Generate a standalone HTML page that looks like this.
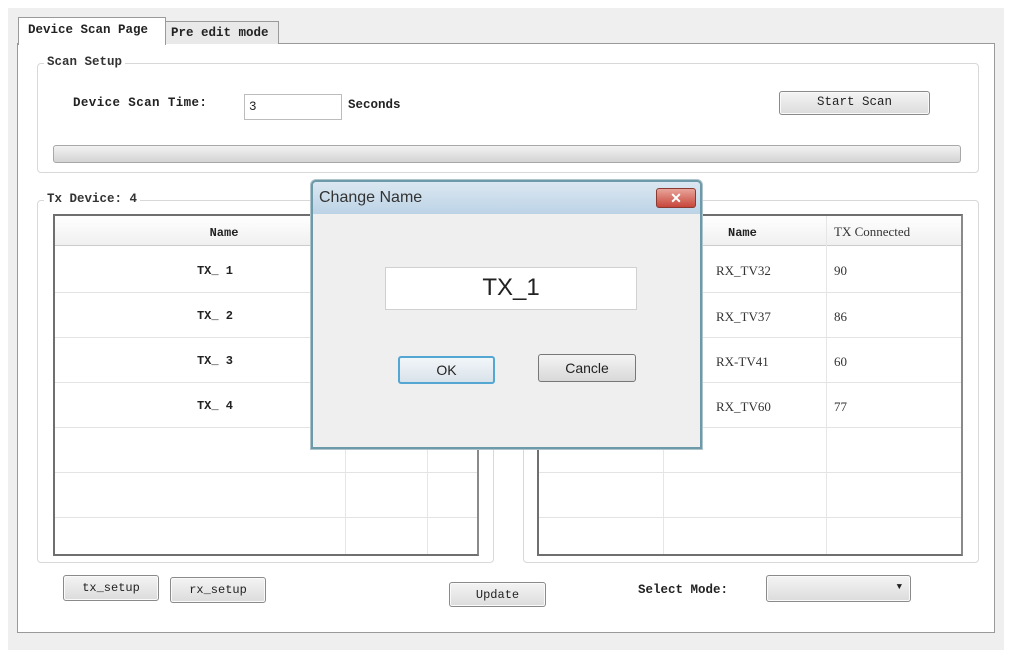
<!DOCTYPE html>
<html><head><meta charset="utf-8"><style>
*{box-sizing:border-box;margin:0;padding:0}
body{width:1014px;height:658px;background:#fff;position:relative;overflow:hidden;font-family:"Liberation Mono",monospace;font-size:12px;color:#222}
.a{position:absolute}
.btn{position:absolute;border:1px solid #8a8a8a;border-radius:3px;background:linear-gradient(#f4f4f4,#dcdcdc);text-align:center;font-size:12px;box-shadow:inset 0 0 0 1px #fafafa}
.grp{position:absolute;border:1px solid #d8d8d8;border-radius:4px}
.lg{position:absolute;background:#fff;padding:0 3px;font-size:12.5px;font-weight:bold;color:#333}
.hl{position:absolute;height:1px;background:#e3e3e3}
.vl{position:absolute;width:1px;background:#e6e6e6}
.c{position:absolute;font-weight:bold;font-size:12px;text-align:center}
.s{position:absolute;font-family:"Liberation Sans Narrow","Liberation Serif",serif;font-size:13px;color:#333}
</style></head><body>
<div class="a" style="left:8px;top:8px;width:996px;height:642px;background:#efefef"></div>
<div class="a" style="left:17px;top:43px;width:978px;height:590px;background:#fff;border:1px solid #9a9a9a"></div>
<div class="a" style="left:165px;top:21px;width:114px;height:23px;background:#e9e9e9;border:1px solid #9a9a9a;border-bottom:none;font-weight:bold;font-size:12.5px;padding:4px 0 0 5px">Pre edit mode</div>
<div class="a" style="left:18px;top:17px;width:148px;height:28px;background:#fff;border:1px solid #9a9a9a;border-bottom:none;font-weight:bold;font-size:12.5px;padding:5px 0 0 9px">Device Scan Page</div>
<div class="grp" style="left:37px;top:63px;width:942px;height:110px"></div>
<div class="lg" style="left:44px;top:55px">Scan Setup</div>
<div class="a" style="left:73px;top:96px;font-weight:bold;font-size:12.5px;letter-spacing:0.4px">Device Scan Time:</div>
<div class="a" style="left:244px;top:94px;width:98px;height:26px;border:1px solid #bcbcbc;padding:5px 0 0 4px;font-size:12.5px">3</div>
<div class="a" style="left:348px;top:98px;font-weight:bold;font-size:12.5px">Seconds</div>
<div class="btn" style="left:779px;top:91px;width:151px;height:24px;padding-top:3px;font-size:12.5px">Start Scan</div>
<div class="a" style="left:53px;top:145px;width:908px;height:18px;border:1px solid #a8a8a8;border-radius:3px;background:linear-gradient(#f2f2f2,#d4d4d4)"></div>
<div class="grp" style="left:37px;top:200px;width:457px;height:363px"></div>
<div class="lg" style="left:44px;top:192px">Tx Device: 4</div>
<div class="a" style="left:53px;top:214px;width:426px;height:342px;border:2px solid #6f6f6f;border-right-color:#8a8a8a;background:#fff"></div>
<div class="a" style="left:55px;top:216px;width:422px;height:30px;background:linear-gradient(#fff,#f0f0f0);border-bottom:1px solid #ccc"></div>
<div class="c" style="left:55px;top:226px;width:338px">Name</div>
<div class="vl" style="left:345px;top:246px;height:308px"></div>
<div class="vl" style="left:427px;top:246px;height:308px"></div>
<div class="hl" style="left:55px;top:292px;width:422px"></div>
<div class="hl" style="left:55px;top:337px;width:422px"></div>
<div class="hl" style="left:55px;top:382px;width:422px"></div>
<div class="hl" style="left:55px;top:427px;width:422px"></div>
<div class="hl" style="left:55px;top:472px;width:422px"></div>
<div class="hl" style="left:55px;top:517px;width:422px"></div>
<div class="c" style="left:150px;top:264px;width:130px">TX_ 1</div>
<div class="c" style="left:150px;top:309px;width:130px">TX_ 2</div>
<div class="c" style="left:150px;top:354px;width:130px">TX_ 3</div>
<div class="c" style="left:150px;top:399px;width:130px">TX_ 4</div>
<div class="grp" style="left:523px;top:200px;width:456px;height:363px"></div>
<div class="a" style="left:537px;top:214px;width:426px;height:342px;border:2px solid #6f6f6f;border-right-color:#8a8a8a;background:#fff"></div>
<div class="a" style="left:539px;top:216px;width:422px;height:30px;background:linear-gradient(#fff,#f0f0f0);border-bottom:1px solid #ccc"></div>
<div class="vl" style="left:663px;top:246px;height:308px"></div>
<div class="vl" style="left:826px;top:216px;height:338px"></div>
<div class="hl" style="left:539px;top:292px;width:422px"></div>
<div class="hl" style="left:539px;top:337px;width:422px"></div>
<div class="hl" style="left:539px;top:382px;width:422px"></div>
<div class="hl" style="left:539px;top:427px;width:422px"></div>
<div class="hl" style="left:539px;top:472px;width:422px"></div>
<div class="hl" style="left:539px;top:517px;width:422px"></div>
<div class="c" style="left:728px;top:226px">Name</div>
<div class="s" style="left:834px;top:224px">TX Connected</div>
<div class="s" style="left:716px;top:263px">RX_TV32</div><div class="s" style="left:834px;top:263px">90</div>
<div class="s" style="left:716px;top:309px">RX_TV37</div><div class="s" style="left:834px;top:309px">86</div>
<div class="s" style="left:716px;top:354px">RX-TV41</div><div class="s" style="left:834px;top:354px">60</div>
<div class="s" style="left:716px;top:399px">RX_TV60</div><div class="s" style="left:834px;top:399px">77</div>
<div class="btn" style="left:63px;top:575px;width:96px;height:26px;padding-top:5px">tx_setup</div>
<div class="btn" style="left:170px;top:577px;width:96px;height:26px;padding-top:5px">rx_setup</div>
<div class="btn" style="left:449px;top:582px;width:97px;height:25px;padding-top:5px">Update</div>
<div class="a" style="left:638px;top:583px;font-weight:bold;font-size:12.5px">Select Mode:</div>
<div class="btn" style="left:766px;top:575px;width:145px;height:27px"><span class="a" style="right:8px;top:6px;font-size:9px">&#9660;</span></div>
<div class="a" style="left:311px;top:180px;width:391px;height:269px;border:2px solid #6c9aa8;border-radius:5px 5px 0 0;background:#ececec;box-shadow:0 0 0 1px #b0c4cc"></div>
<div class="a" style="left:313px;top:182px;width:387px;height:32px;border-radius:4px 4px 0 0;background:linear-gradient(#dbe7f1,#bcd3e6)"></div>
<div class="a" style="left:319px;top:189px;font-family:'Liberation Sans',sans-serif;font-size:16px;color:#333">Change Name</div>
<div class="a" style="left:656px;top:188px;width:40px;height:20px;border:1px solid #8b3a32;border-radius:3px;background:linear-gradient(#e8a49a,#c7463a);color:#fff;text-align:center;font-family:'Liberation Sans',sans-serif;font-weight:bold;font-size:14px;line-height:18px">✕</div>
<div class="a" style="left:313px;top:214px;width:387px;height:233px;background:#efefef"></div>
<div class="a" style="left:385px;top:267px;width:252px;height:43px;background:#fff;border:1px solid #d0d0d0;text-align:center;font-family:'Liberation Sans',sans-serif;font-size:24px;line-height:40px;color:#222">TX_1</div>
<div class="a" style="left:398px;top:356px;width:97px;height:28px;border:2px solid #55a7d3;border-radius:3px;background:linear-gradient(#f2f6f9,#d9e2ea);text-align:center;font-family:'Liberation Sans',sans-serif;font-size:14px;line-height:24px">OK</div>
<div class="a" style="left:538px;top:354px;width:98px;height:28px;border:1px solid #777;border-radius:3px;background:linear-gradient(#f4f4f4,#d8d8d8);text-align:center;font-family:'Liberation Sans',sans-serif;font-size:14px;line-height:26px">Cancle</div>
</body></html>
